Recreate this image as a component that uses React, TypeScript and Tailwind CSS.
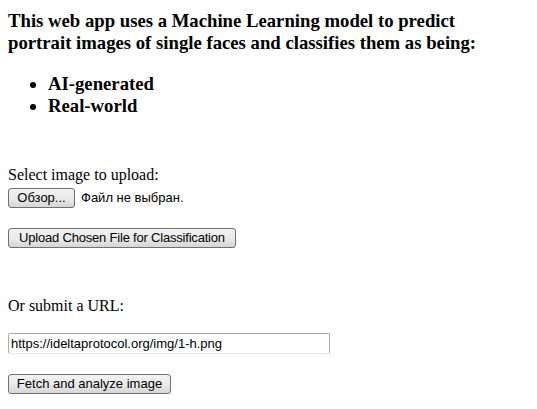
const serif = "font-['Liberation_Serif','Times_New_Roman',serif]";
const ui = "font-['Liberation_Sans',Tahoma,sans-serif]";

function WinButton({ label, className = '' }: { label: string; className?: string }) {
    return (
        <button
            type="button"
            className={`${ui} flex h-[20px] items-center justify-center whitespace-nowrap rounded-[3px] border border-[#707070] bg-gradient-to-b from-[#f2f2f2] via-[#ebebeb] to-[#d6d6d6] text-[13px] leading-[18px] text-black ${className}`}
        >
            {label}
        </button>
    );
}

export default function App() {
    return (
        <div className={`${serif} min-h-[409px] w-[537px] bg-white pl-[8px] text-black`}>
            <h3 className="pt-[10px] text-[18.72px] font-bold leading-[22px]">
                This web app uses a Machine Learning model to predict
                <br />
                portrait images of single faces and classifies them as being:
            </h3>
            <ul className="mt-[19px] list-disc pl-[40px] text-[18.72px] font-bold leading-[22px]">
                <li>AI-generated</li>
                <li>Real-world</li>
            </ul>

            <div className="mt-[49px] text-[16px] leading-[18px]">Select image to upload:</div>
            <div className="mt-[4px] flex items-center gap-[6px]">
                <WinButton label="Обзор..." className="w-[67px]" />
                <span className={`${ui} text-[13px] leading-[18px]`}>Файл не выбран.</span>
            </div>
            <div className="mt-[20px]">
                <WinButton label="Upload Chosen File for Classification" className="w-[228px] tracking-[-0.2px]" />
            </div>

            <div className="mt-[49px] text-[16px] leading-[18px]">Or submit a URL:</div>
            <input
                type="text"
                defaultValue="https://ideltaprotocol.org/img/1-h.png"
                className={`${ui} mt-[18px] block h-[21px] w-[322px] rounded-[2px] border border-[#abadb3] border-b-[#e3e9ef] px-[2px] text-[13px] leading-[19px] text-black outline-none`}
            />
            <div className="mt-[20px]">
                <WinButton label="Fetch and analyze image" className="w-[163px]" />
            </div>
        </div>
    );
}
